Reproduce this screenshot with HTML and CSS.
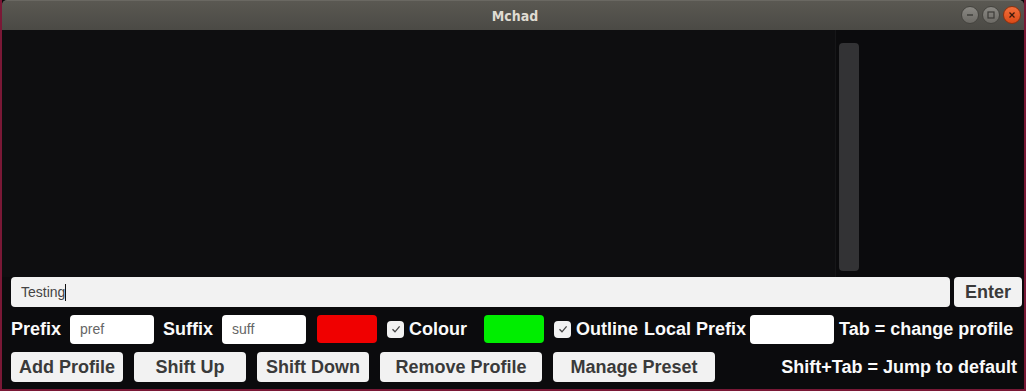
FILE: index.html
```html
<!DOCTYPE html>
<html lang="en">
<head>
    <meta charset="UTF-8">
    <title>Mchad</title>
    <link rel="stylesheet" href="styles.css">
</head>
<body>
    <div class="window">
        <div class="titlebar">
            <span class="title">Mchad</span>
            <div class="controls">
                <span class="ctl ctl-min"><svg width="8" height="8" viewBox="0 0 8 8"><path d="M1 4h6" stroke="#3c3b37" stroke-width="1.4"/></svg></span>
                <span class="ctl ctl-max"><svg width="8" height="8" viewBox="0 0 8 8"><rect x="1" y="1" width="6" height="6" fill="none" stroke="#3c3b37" stroke-width="1.2"/></svg></span>
                <span class="ctl ctl-close"><svg width="8" height="8" viewBox="0 0 8 8"><path d="M1.5 1.5l5 5M6.5 1.5l-5 5" stroke="#3a1a0c" stroke-width="1.3"/></svg></span>
            </div>
        </div>

        <div class="content">
            <div class="log-area">
                <div class="log"></div>
                <div class="scrollbar"></div>
            </div>

            <div class="row row-input">
                <div class="text-input">Testing<span class="caret"></span></div>
                <button class="btn btn-enter">Enter</button>
            </div>

            <div class="row row-options">
                <span class="label">Prefix</span>
                <div class="field">pref</div>
                <span class="label">Suffix</span>
                <div class="field">suff</div>
                <div class="swatch swatch-red"></div>
                <span class="check"><svg width="12" height="12" viewBox="0 0 12 12"><path d="M2.5 6.2l2.5 2.6 4.6-5.4" fill="none" stroke="#444" stroke-width="1.3"/></svg></span>
                <span class="label">Colour</span>
                <div class="swatch swatch-green"></div>
                <span class="check"><svg width="12" height="12" viewBox="0 0 12 12"><path d="M2.5 6.2l2.5 2.6 4.6-5.4" fill="none" stroke="#444" stroke-width="1.3"/></svg></span>
                <span class="label">Outline</span>
                <span class="label label-local">Local Prefix</span>
                <div class="field field-local"></div>
                <span class="label label-tab">Tab = change profile</span>
            </div>

            <div class="row row-buttons">
                <button class="btn btn-small">Add Profile</button>
                <button class="btn btn-small">Shift Up</button>
                <button class="btn btn-small">Shift Down</button>
                <button class="btn btn-wide">Remove Profile</button>
                <button class="btn btn-wide">Manage Preset</button>
                <span class="label hint">Shift+Tab = Jump to default</span>
            </div>
        </div>
    </div>
</body>
</html>
```

FILE: styles.css
```css
* {
    box-sizing: border-box;
    font-family: "Liberation Sans", Arial, sans-serif;
}

body {
    margin: 0;
    width: 1026px;
    height: 391px;
    overflow: hidden;
    background: #7a1836;
}

.window {
    margin-left: 2px;
    width: 1022px;
    height: 389px;
    background: #0b0b0d;
    display: flex;
    flex-direction: column;
}

.titlebar {
    height: 30px;
    flex: none;
    background: linear-gradient(#5a5852, #4b4a45);
    border-radius: 5px 5px 0 0;
    border-top: 1px solid #6a6862;
    display: flex;
    align-items: center;
    justify-content: center;
    position: relative;
}

.title {
    font-family: "DejaVu Sans Condensed", "DejaVu Sans", sans-serif;
    font-weight: bold;
    font-size: 14px;
    color: #dfdbd2;
    margin-left: 4px;
}

.controls {
    position: absolute;
    right: 3px;
    top: 5px;
    display: flex;
    gap: 3px;
}

.ctl {
    width: 18px;
    height: 18px;
    border-radius: 50%;
    display: flex;
    align-items: center;
    justify-content: center;
    background: linear-gradient(#8a8883, #6c6a65);
    border: 1px solid #45443f;
}

.ctl-close {
    background: linear-gradient(#f36f3b, #dc4a17);
    border-color: #8d3210;
}

.content {
    flex: 1;
    display: flex;
    flex-direction: column;
    padding: 0 0 0 9px;
}

.log-area {
    height: 247px;
    display: flex;
    padding-top: 13px;
    margin-left: -9px;
}

.log {
    width: 834px;
    margin-top: -13px;
    background: #0e0e10;
    border-right: 1px solid #161618;
}

.scrollbar {
    width: 20px;
    height: 228px;
    margin-left: 3px;
    background: #333335;
    border-radius: 4px;
}

.row {
    display: flex;
    align-items: center;
}

.row-input {
    height: 30px;
    gap: 4px;
}

.text-input {
    width: 939px;
    height: 30px;
    background: #f2f2f2;
    border-radius: 4px;
    padding: 0 0 0 10px;
    font-size: 14px;
    color: #444;
    display: flex;
    align-items: center;
}

.caret {
    display: inline-block;
    width: 1px;
    height: 17px;
    background: #111;
}

.btn {
    height: 30px;
    padding: 0;
    background: #f2f2f2;
    border: none;
    border-radius: 4px;
    font-weight: bold;
    font-size: 18px;
    color: #3a3a3a;
}

.btn-enter {
    width: 68px;
}

.row-options {
    margin-top: 7px;
    height: 30px;
    gap: 9px;
}

.label {
    font-weight: bold;
    font-size: 18px;
    color: #fafafa;
    white-space: nowrap;
}

.field {
    width: 84px;
    height: 29px;
    background: #fff;
    border-radius: 4px;
    padding-left: 10px;
    font-size: 14px;
    color: #666;
    display: flex;
    align-items: center;
}

.swatch {
    width: 60px;
    height: 28px;
    border-radius: 4px;
}

.swatch-red {
    margin-left: 2px;
    background: #f00000;
}

.swatch-green {
    margin-left: 8px;
    background: #00ee00;
}

.check {
    width: 17px;
    height: 17px;
    margin-left: 1px;
    margin-right: -4px;
    background: #f2f2f2;
    border-radius: 4px;
    display: flex;
    align-items: center;
    justify-content: center;
}

.label-local {
    margin-left: -3px;
}

.field-local {
    margin-left: -5px;
}

.label-tab {
    margin-left: -4px;
}

.row-buttons {
    margin-top: 8px;
    height: 30px;
    gap: 11px;
}

.btn-small {
    width: 112px;
}

.btn-wide {
    width: 162px;
}

.hint {
    margin-left: auto;
    margin-right: 7px;
}
```
